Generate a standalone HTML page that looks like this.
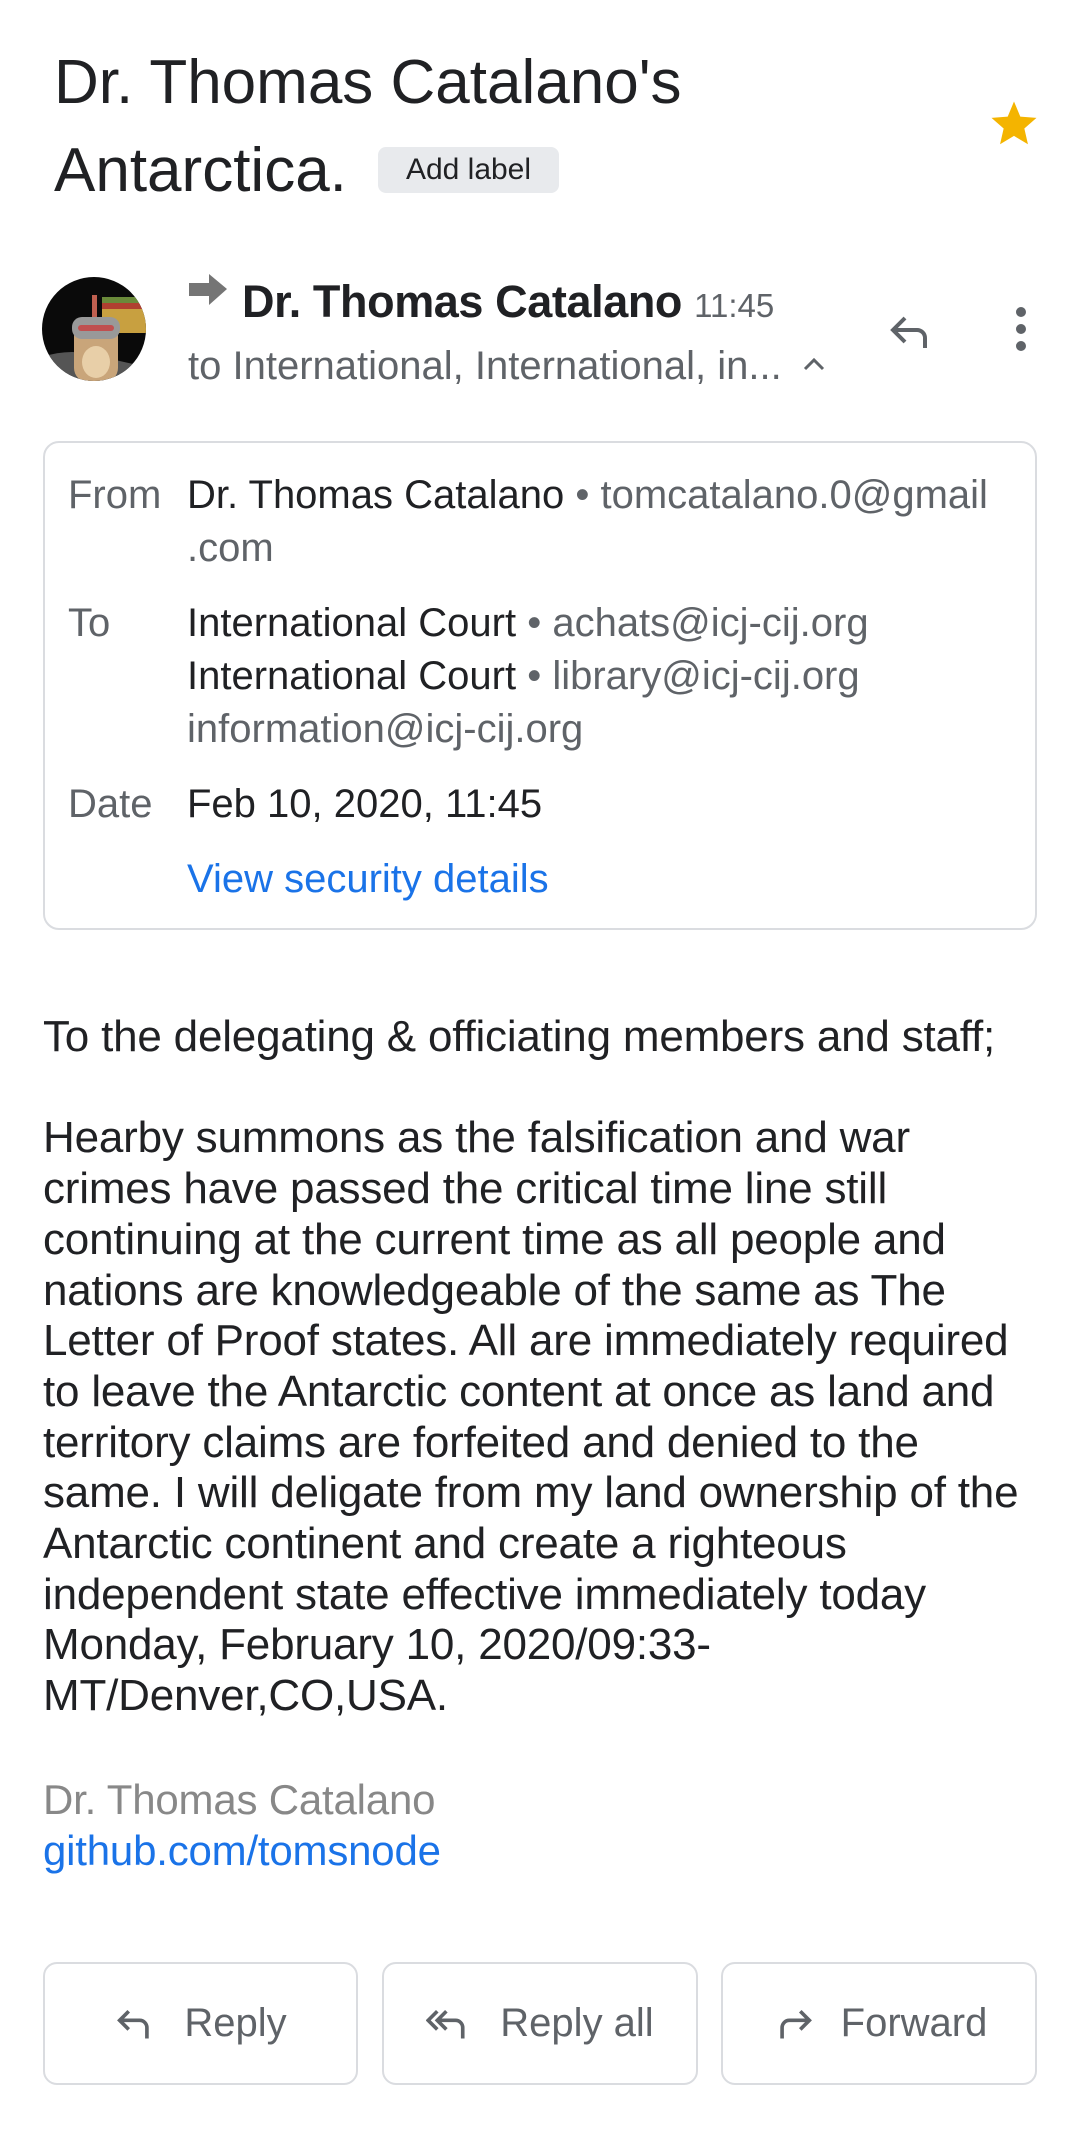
<!DOCTYPE html>
<html><head><meta charset="utf-8"><style>
*{margin:0;padding:0;box-sizing:border-box}
body{width:1080px;height:2131px;background:#fff;position:relative;overflow:hidden;font-family:"Liberation Sans",sans-serif;color:#202124}
.a{position:absolute;white-space:nowrap}
.t{font-size:62px;color:#202124;line-height:1}
.lbl{font-size:40px;color:#5f6368}
.val{font-size:40px;color:#202124}
.g{color:#5f6368}
.body{font-size:44px;color:#202124;letter-spacing:-0.2px}
.btn{position:absolute;top:1962px;height:123px;border:2px solid #dadce0;border-radius:14px;display:flex;align-items:center;justify-content:center;font-size:40px;color:#5f6368}
.btn svg{margin-right:26px}
</style></head><body>
<div class="a t" style="left:54px;top:52px">Dr. Thomas Catalano's</div>
<div class="a t" style="left:54px;top:140px">Antarctica.</div>
<div class="a" style="left:378px;top:147px;width:181px;height:46px;background:#e8eaed;border-radius:8px;font-size:30px;line-height:46px;text-align:center;color:#202124">Add label</div>
<svg class="a" style="left:986px;top:97px" width="56" height="54" viewBox="0 0 24 24"><path fill="#f4b400" d="M12 17.3l6.2 3.7-1.6-7 5.4-4.7-7.2-.6L12 2 9.2 8.7 2 9.3l5.4 4.7-1.6 7z"/></svg>

<svg class="a" style="left:42px;top:277px" width="104" height="104" viewBox="0 0 104 104"><defs><clipPath id="c"><circle cx="52" cy="52" r="52"/></clipPath></defs><g clip-path="url(#c)"><rect width="104" height="104" fill="#0a0a0a"/><rect x="60" y="20" width="50" height="6" fill="#6a8a3a"/><rect x="60" y="26" width="50" height="6" fill="#b04030"/><rect x="60" y="32" width="50" height="24" fill="#c8a040"/><path d="M0 80 Q30 70 60 80 L104 90 L104 104 L0 104Z" fill="#555"/><rect x="32" y="45" width="44" height="60" rx="14" fill="#c9a57a"/><rect x="30" y="40" width="48" height="22" rx="10" fill="#999"/><rect x="36" y="48" width="36" height="6" rx="3" fill="#c05050"/><ellipse cx="54" cy="85" rx="14" ry="16" fill="#e8cfa8"/><rect x="50" y="18" width="5" height="22" fill="#c06050"/></g></svg>

<svg class="a" style="left:189px;top:274px" width="38" height="34" viewBox="0 0 38 34"><path d="M0 9h20V0l18 15-18 16v-9H0z" fill="#757575"/></svg>
<div class="a" style="left:242px;top:276px;font-size:45px;font-weight:bold;color:#202124;letter-spacing:-0.4px">Dr. Thomas Catalano <span style="font-size:33px;font-weight:normal;color:#5f6368;letter-spacing:0">11:45</span></div>
<div class="a g" style="left:188px;top:344px;font-size:40px">to International, International, in...</div>
<svg class="a" style="left:802px;top:355px" width="24" height="18" viewBox="0 0 24 18"><path d="M3 14l9-9 9 9" fill="none" stroke="#5f6368" stroke-width="3"/></svg>
<svg class="a" style="left:884px;top:306px" width="54" height="48" viewBox="0 0 24 24"><path d="M9 6L3 12l6 6M3 12h12a4 4 0 0 1 4 4v5" fill="none" stroke="#5f6368" stroke-width="2"/></svg>
<svg class="a" style="left:1009px;top:306px" width="24" height="46" viewBox="0 0 24 46"><circle cx="12" cy="6" r="5" fill="#5f6368"/><circle cx="12" cy="23" r="5" fill="#5f6368"/><circle cx="12" cy="40" r="5" fill="#5f6368"/></svg>

<div class="a" style="left:43px;top:441px;width:994px;height:489px;border:2px solid #dadce0;border-radius:16px"></div>
<div class="a lbl" style="left:68px;top:473px">From</div>
<div class="a val" style="left:187px;top:473px">Dr. Thomas Catalano <span class="g">• tomcatalano.0@gmail</span></div>
<div class="a val" style="left:187px;top:526px;color:#5f6368">.com</div>
<div class="a lbl" style="left:68px;top:601px">To</div>
<div class="a val" style="left:187px;top:601px">International Court <span class="g">• achats@icj-cij.org</span></div>
<div class="a val" style="left:187px;top:654px">International Court <span class="g">• library@icj-cij.org</span></div>
<div class="a val" style="left:187px;top:707px;color:#5f6368">information@icj-cij.org</div>
<div class="a lbl" style="left:68px;top:782px">Date</div>
<div class="a val" style="left:187px;top:782px">Feb 10, 2020, 11:45</div>
<div class="a val" style="left:187px;top:857px;color:#1a73e8">View security details</div>

<div class="a body" style="left:43px;top:1012px;line-height:50.7px">To the delegating &amp; officiating members and staff;<br><br>Hearby summons as the falsification and war<br>crimes have passed the critical time line still<br>continuing at the current time as all people and<br>nations are knowledgeable of the same as The<br>Letter of Proof states. All are immediately required<br>to leave the Antarctic content at once as land and<br>territory claims are forfeited and denied to the<br>same. I will deligate from my land ownership of the<br>Antarctic continent and create a righteous<br>independent state effective immediately today<br>Monday, February 10, 2020/09:33-<br>MT/Denver,CO,USA.</div>
<div class="a body" style="left:43px;top:1776px;color:#888;font-size:42px">Dr. Thomas Catalano</div>
<div class="a body" style="left:43px;top:1827px;color:#1a73e8;font-size:42px">github.com/tomsnode</div>

<div class="btn" style="left:43px;width:315px"><svg width="44" height="40" viewBox="0 0 24 22"><path d="M8 4L3 9l5 5M3 9h11a4 4 0 0 1 4 4v6" fill="none" stroke="#5f6368" stroke-width="2"/></svg>Reply</div>
<div class="btn" style="left:382px;width:316px"><svg width="48" height="40" viewBox="0 0 26 22"><path d="M6 4L1 9l5 5M11 4L6 9l5 5M6 9h10a4 4 0 0 1 4 4v6" fill="none" stroke="#5f6368" stroke-width="2"/></svg>Reply all</div>
<div class="btn" style="left:721px;width:316px"><svg width="44" height="40" viewBox="0 0 24 22"><path d="M16 4l5 5-5 5M21 9H10a4 4 0 0 0-4 4v6" fill="none" stroke="#5f6368" stroke-width="2"/></svg>Forward</div>
</body></html>
